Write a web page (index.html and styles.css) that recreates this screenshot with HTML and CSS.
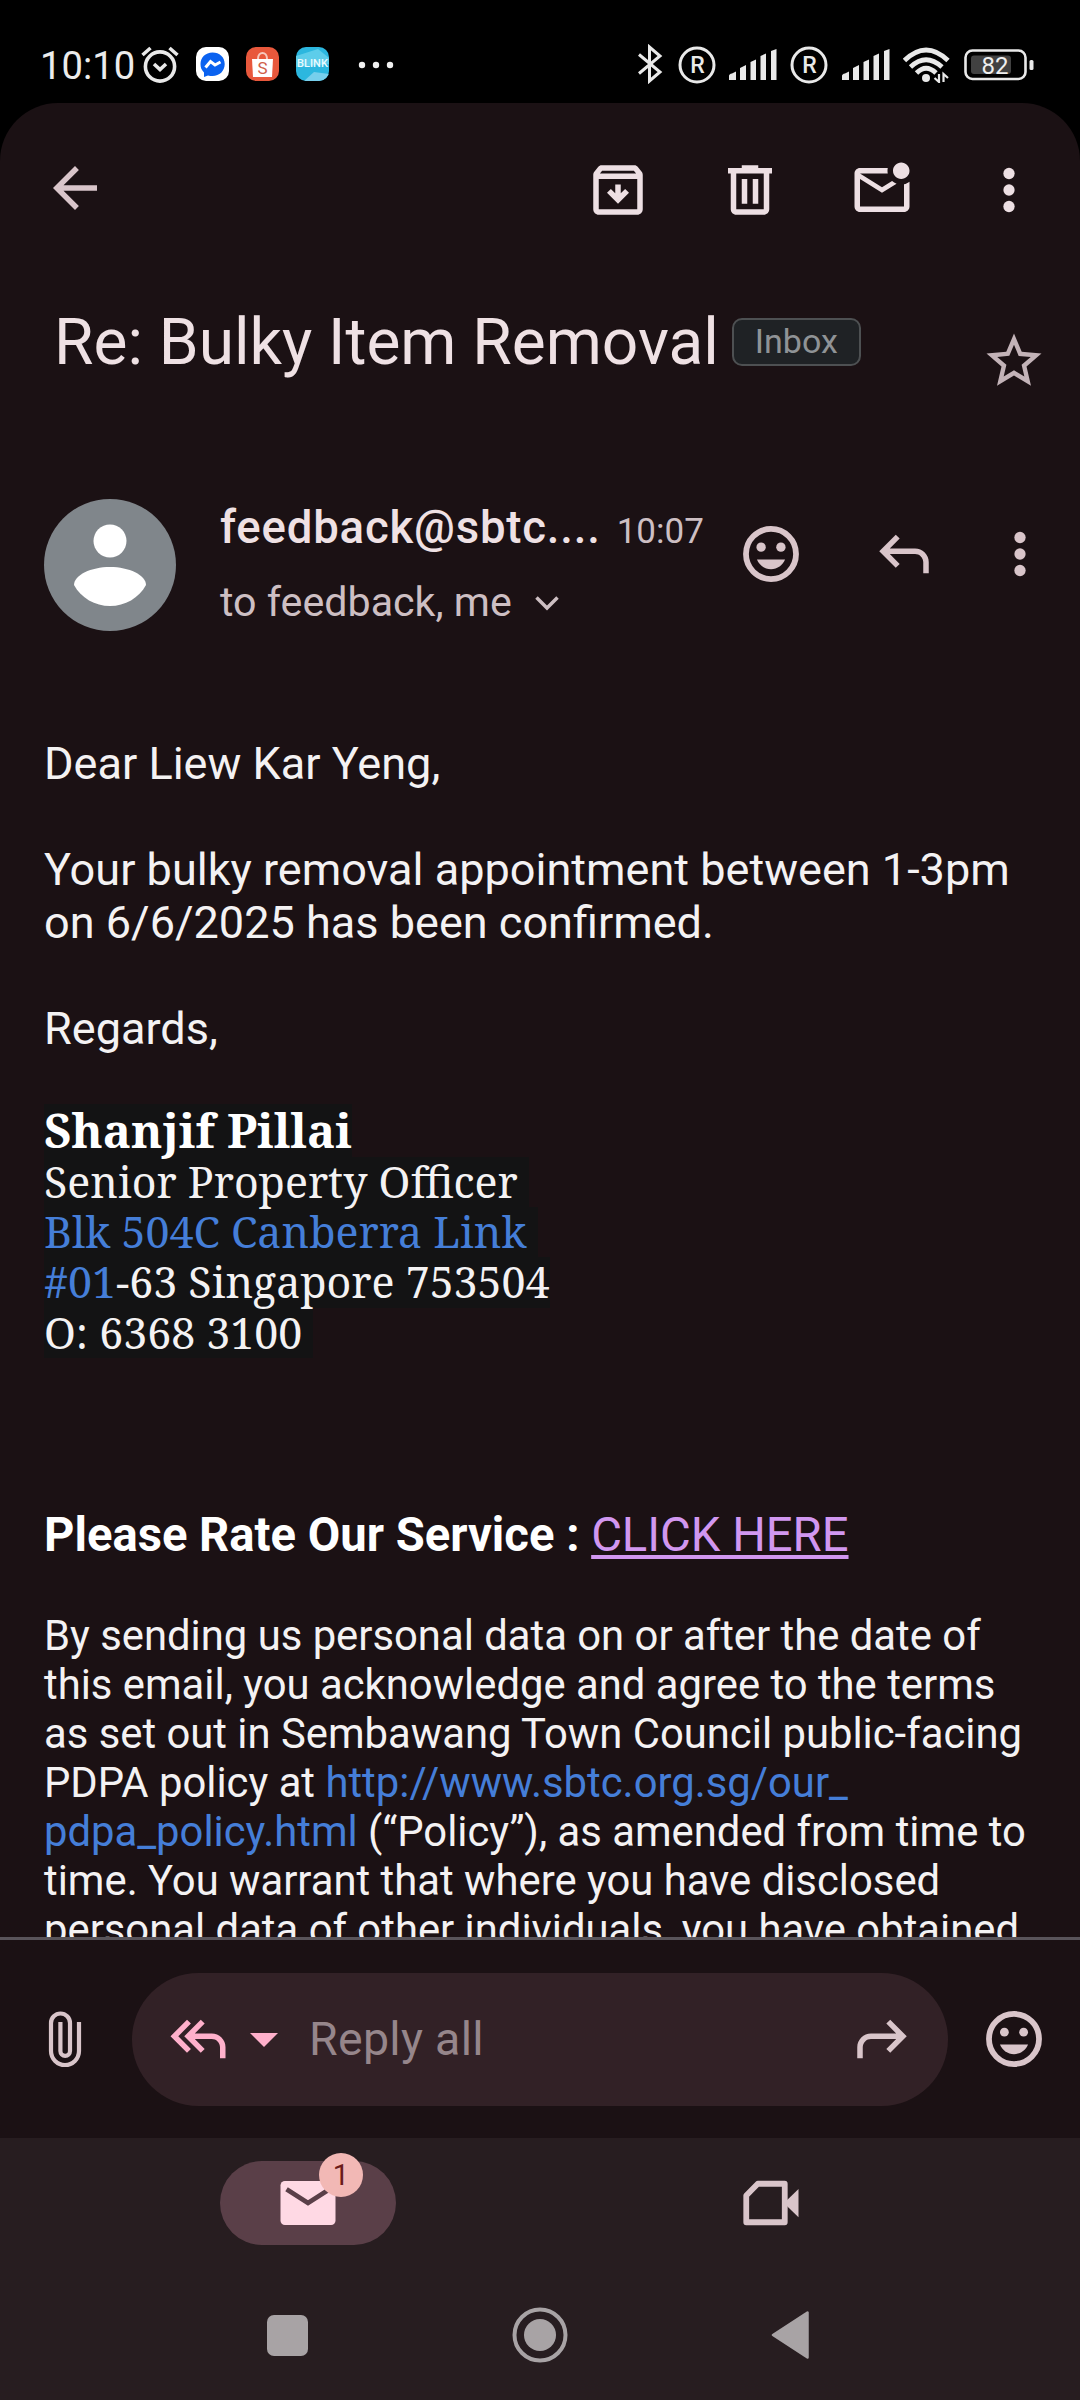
FILE: index.html
```
<!DOCTYPE html>
<html lang="en">
<head>
<meta charset="utf-8">
<title>Re: Bulky Item Removal</title>
<link rel="stylesheet" href="styles.css">
</head>
<body>
<div class="phone">
  <header class="status">
    <span class="clock">10:10</span>
    <svg class="alarm" width="40" height="38" viewBox="0 0 40 38" fill="none" stroke="#e9e9e9" stroke-width="3.6"><circle cx="20" cy="21.5" r="14.6"/><path d="M14 19l6 5.500 6-5.500M2.500 10l8-7M37.500 10l-8-7"/></svg>
    <svg class="app-icon" width="33" height="34" viewBox="0 0 33 34"><rect width="33" height="34" rx="10" fill="#fff"/><path d="M16.500 5.500c-7 0-12 5-12 11.500 0 3.500 1 6 3.500 8.500v4.500l4-1.500c1.500.5 3 .6 4.500.6 7 0 12.200-5 12.200-12S23.500 5.500 16.500 5.500z" fill="#0a62f0"/><path d="M9.500 20.500l5-6 4.500 3.500 5.500-3" fill="none" stroke="#fff" stroke-width="3"/></svg>
    <svg class="app-icon" width="33" height="34" viewBox="0 0 33 34"><rect width="33" height="34" rx="10" fill="#e8583c"/><path d="M6 12h21l-1 18H7z" fill="#fff"/><path d="M12 12c0-8 9-8 9 0" fill="none" stroke="#f6c9bf" stroke-width="2"/><text x="16.500" y="27" font-family="Roboto" font-size="17" text-anchor="middle" fill="#d0604a">S</text></svg>
    <svg class="app-icon" width="33" height="34" viewBox="0 0 33 34"><defs><clipPath id="tile"><rect width="33" height="34" rx="10"/></clipPath></defs><g clip-path="url(#tile)"><rect width="33" height="34" fill="#2cb7df"/><path d="M0 9L22 2l11 9v6L0 20z" fill="#5dcdea"/><path d="M8 34l10-9 15 2v7z" fill="#77cfec"/><text x="16.500" y="20" font-family="Roboto" font-weight="500" font-size="11" text-anchor="middle" fill="#e9fbff">BLINK</text></g></svg>
    <svg class="more" width="36" height="8" viewBox="0 0 36 8" fill="#f0f0f0"><circle cx="4" cy="4" r="3.200"/><circle cx="18" cy="4" r="3.200"/><circle cx="32" cy="4" r="3.200"/></svg>
    <svg class="bluetooth" width="26" height="40" viewBox="0 0 26 40" fill="none" stroke="#e9e9e9" stroke-width="3"><path d="M2 10.500L23 28l-10.500 9V3L23 12 2 29.500"/></svg>
    <svg class="roam" width="38" height="38" viewBox="0 0 38 38"><circle cx="19" cy="19" r="17" fill="none" stroke="#e9e9e9" stroke-width="3"/><text x="19.500" y="27" font-family="Roboto" font-weight="500" font-size="23" text-anchor="middle" fill="#e9e9e9">R</text></svg>
    <svg class="signal" width="48" height="32" viewBox="0 0 48 32" fill="#e9e9e9"><path d="M0 27q0-2 3-2.500l4-2V31H0zM11 19l6-3v15h-6zM21.500 13l5.500-2.500V31h-5.500zM31.500 7l5.500-2.500V31h-5.500zM42 2l5.500-2v31H42z"/></svg>
    <svg class="roam second" width="38" height="38" viewBox="0 0 38 38"><circle cx="19" cy="19" r="17" fill="none" stroke="#e9e9e9" stroke-width="3"/><text x="19.500" y="27" font-family="Roboto" font-weight="500" font-size="23" text-anchor="middle" fill="#e9e9e9">R</text></svg>
    <svg class="signal" width="48" height="32" viewBox="0 0 48 32" fill="#e9e9e9"><path d="M0 27q0-2 3-2.500l4-2V31H0zM11 19l6-3v15h-6zM21.500 13l5.500-2.500V31h-5.500zM31.500 7l5.500-2.500V31h-5.500zM42 2l5.500-2v31H42z"/></svg>
    <svg class="wifi" width="48" height="36" viewBox="0 0 48 36"><g fill="none" stroke="#e9e9e9" stroke-width="4.800"><path d="M1.500 13.500Q23 -7.500 45 13.500"/><path d="M7.500 20Q23 5.500 39 20"/><path d="M13.500 26Q23 16.500 33 26"/></g><circle cx="23" cy="31" r="4" fill="#e9e9e9"/><path d="M36 27v8l-4.500-4M40.500 35v-8l4.500 4" fill="none" stroke="#e9e9e9" stroke-width="2.200"/></svg>
    <svg class="battery" width="70" height="32" viewBox="0 0 70 32"><rect x="1.500" y="1.500" width="60" height="28.500" rx="7" fill="none" stroke="#e9e9e9" stroke-width="2.600"/><rect x="7" y="6.500" width="40" height="18.500" rx="3" fill="#414141"/><rect x="65.500" y="11" width="4" height="10" rx="1.500" fill="#e9e9e9"/><text x="31" y="24.500" font-family="Roboto" font-size="24" text-anchor="middle" fill="#efefef">82</text></svg>
  </header>

  <main class="panel">
    <nav class="appbar">
      <svg class="icon back" viewBox="0 0 24 24"><path d="M20 11H7.830l5.590-5.590L12 4l-8 8 8 8 1.410-1.410L7.830 13H20z"/></svg>
      <svg class="icon archive" viewBox="0 0 24 24"><path d="M20.540 5.230l-1.390-1.680C18.880 3.210 18.470 3 18 3H6c-.47 0-.88.21-1.160.55L3.460 5.230C3.170 5.570 3 6.020 3 6.500V19c0 1.100.9 2 2 2h14c1.100 0 2-.9 2-2V6.500c0-.48-.17-.93-.46-1.270zM6.240 5h11.520l.83 1H5.420l.82-1zM5 19V8h14v11H5z"/><path d="M11 10v3.200l-1.600-1.600L8 13l4 4 4-4-1.400-1.400-1.600 1.600V10z"/></svg>
      <svg class="icon trash" viewBox="0 0 24 24"><path d="M15 4V3H9v1H4v2h1v13c0 1.100.9 2 2 2h10c1.100 0 2-.9 2-2V6h1V4h-5zm2 15H7V6h10v13zM9 8h2v9H9zm4 0h2v9h-2z"/></svg>
      <svg class="icon unread" viewBox="0 0 24 24"><path d="M22 8.980V18c0 1.100-.9 2-2 2H4c-1.100 0-2-.9-2-2V6c0-1.100.9-2 2-2h10.100c-.06.32-.1.66-.1 1 0 .34.04.68.1 1H4l8 5 3.670-2.290c.47.43 1.020.76 1.630.98L12 13 4 8v10h16V9.900c.74-.15 1.420-.48 2-.92zM16 5c0 1.660 1.340 3 3 3s3-1.340 3-3-1.340-3-3-3-3 1.340-3 3z"/></svg>
      <svg class="icon menu" viewBox="0 0 24 24"><circle cx="12" cy="6" r="2.050"/><circle cx="12" cy="12" r="2.050"/><circle cx="12" cy="18" r="2.050"/></svg>
    </nav>

    <section class="subject">
      <h1>Re: Bulky Item Removal</h1>
      <span class="chip">Inbox</span>
      <svg class="icon star" viewBox="0 0 24 24"><path d="M22 9.240l-7.190-.62L12 2 9.190 8.630 2 9.240l5.460 4.730L5.820 21 12 17.270 18.180 21l-1.630-7.030L22 9.240zM12 15.400l-3.760 2.270 1-4.280-3.320-2.880 4.380-.38L12 6.100l1.710 4.040 4.380.38-3.320 2.880 1 4.280L12 15.400z"/></svg>
    </section>

    <section class="sender">
      <svg class="avatar" width="132" height="132" viewBox="0 0 132 132"><circle cx="66" cy="66" r="66" fill="#80868b"/><circle cx="66" cy="42" r="16.500" fill="#fff"/><path d="M66 68c19 0 36 8 36 18-7 13-21 21-36 21s-29-8-36-21c0-10 17-18 36-18z" fill="#fff"/></svg>
      <div class="who">
        <div class="from"><span class="name">feedback@sbtc....</span><span class="time">10:07</span></div>
        <div class="to"><span>to feedback, me</span><svg width="26" height="16" viewBox="0 0 26 16" fill="none" stroke="#cdbfc3" stroke-width="3.500"><path d="M2.500 2.500L13 13 23.500 2.500"/></svg></div>
      </div>
      <svg class="icon smile" viewBox="0 0 24 24"><circle cx="12" cy="12" r="9.100" fill="none" stroke="#d9c5ca" stroke-width="2.100"/><circle cx="8.400" cy="9.500" r="1.700"/><circle cx="15.600" cy="9.500" r="1.700"/><path d="M12 17.500c2.330 0 4.310-1.460 5.110-3.500H6.890c.8 2.040 2.780 3.500 5.110 3.500z"/></svg>
      <svg class="icon reply" viewBox="0 0 24 24"><path d="M19 19v-4c0-.83-.29-1.540-.88-2.120C17.540 12.290 16.830 12 16 12H6.830l3.600 3.600L9 17l-6-6 6-6 1.430 1.400L6.830 10H16c1.380 0 2.560.49 3.540 1.460C20.510 12.440 21 13.630 21 15v4z"/></svg>
      <svg class="icon options" viewBox="0 0 24 24"><circle cx="12" cy="6" r="2.050"/><circle cx="12" cy="12" r="2.050"/><circle cx="12" cy="18" r="2.050"/></svg>
    </section>

    <article class="message">
      <p>Dear Liew Kar Yeng,</p>
      <p>Your bulky removal appointment between 1-3pm<br>on 6/6/2025 has been confirmed.</p>
      <p>Regards,</p>
      <div class="signature">
        <div class="sig-name">Shanjif Pillai</div>
        <div>Senior Property Officer </div>
        <div><a>Blk 504C Canberra Link</a> </div>
        <div><a>#01</a>-63 Singapore 753504</div>
        <div>O: 6368 3100 </div>
      </div>
      <p class="rate"><b>Please Rate Our Service : </b><a>CLICK HERE</a></p>
      <p class="legal">By sending us personal data on or after the date of<br>this email, you acknowledge and agree to the terms<br>as set out in Sembawang Town Council public-facing<br>PDPA policy at <a>http://www.sbtc.org.sg/our_</a><br><a>pdpa_policy.html</a> (“Policy”), as amended from time to<br>time. You warrant that where you have disclosed<br>personal data of other individuals, you have obtained</p>
    </article>

    <section class="composer">
      <svg class="clip" width="40" height="66" viewBox="0 0 40 66" fill="none" stroke="#d9c5ca" stroke-width="4.200"><path d="M34 16v29a14 14 0 0 1-28 0V17a9.500 9.500 0 0 1 19 0v28a4.800 4.800 0 0 1-9.600 0V16"/></svg>
      <div class="field">
        <svg class="icon pink" viewBox="0 0 24 24"><path d="M20 19v-4c0-.83-.29-1.540-.88-2.120C18.540 12.290 17.830 12 17 12h-6.170l3.600 3.600L13 17l-6-6 6-6 1.430 1.400-3.600 3.600H17c1.380 0 2.560.49 3.540 1.460C21.510 12.440 22 13.630 22 15v4zM8 17l-6-6 6-6 1.430 1.400L4.830 11l4.600 4.600z"/></svg>
        <svg class="caret" width="28" height="14" viewBox="0 0 28 14"><path d="M0 0h28L14 14z" fill="#ffb0cb"/></svg>
        <span class="hint">Reply all</span>
        <svg class="icon forward" viewBox="0 0 24 24"><path d="M5 19v-4c0-.83.29-1.540.88-2.120C6.460 12.290 7.170 12 8 12h9.170l-3.600 3.600L15 17l6-6-6-6-1.430 1.400 3.600 3.600H8c-1.380 0-2.560.49-3.540 1.460C3.490 12.440 3 13.630 3 15v4z"/></svg>
      </div>
      <svg class="icon emoji" viewBox="0 0 24 24"><circle cx="12" cy="12" r="9.100" fill="none" stroke="#d9c5ca" stroke-width="2.100"/><circle cx="8.500" cy="9.500" r="1.600"/><circle cx="15.500" cy="9.500" r="1.600"/><path d="M12 17.500c2.330 0 4.310-1.460 5.110-3.500H6.890c.8 2.040 2.780 3.500 5.110 3.500z"/></svg>
    </section>
  </main>

  <footer class="bottom">
    <nav class="tabs">
      <div class="tab">
        <svg class="icon" viewBox="0 0 24 24"><rect x="2" y="4" width="20" height="16" rx="1.600" fill="#ffd9e4"/><path d="M4.200 7l7.800 5 7.800-5" fill="none" stroke="#5a3f48" stroke-width="1.700"/></svg>
        <span class="badge">1</span>
      </div>
      <svg class="icon video" viewBox="0 0 24 24"><path d="M7.200 5H17v14H3V9.300z" fill="none" stroke="#d9c5ca" stroke-width="2.100" stroke-linejoin="round"/><path d="M17.500 11.300L22 6.900v10.300l-4.500-4.400z"/></svg>
    </nav>
    <nav class="system">
      <svg width="41" height="41" viewBox="0 0 41 41"><rect width="41" height="41" rx="7" fill="#a8a3a5"/></svg>
      <svg width="56" height="56" viewBox="0 0 56 56"><circle cx="28" cy="28" r="25.500" fill="none" stroke="#a8a3a5" stroke-width="4"/><circle cx="28" cy="28" r="16" fill="#a8a3a5"/></svg>
      <svg width="38" height="48" viewBox="0 0 38 48"><path d="M36.500 1.500v45L2 24z" fill="#a8a3a5" stroke="#a8a3a5" stroke-width="2.500" stroke-linejoin="round"/></svg>
    </nav>
  </footer>
</div>
</body>
</html>
```
FILE: styles.css
```
* { box-sizing: border-box; }
body { margin: 0; background: #000; font-family: Roboto, sans-serif; color: #f4f2f3; }
svg { display: block; flex: none; }
h1, p { margin: 0; font-weight: 400; }
.phone { width: 1080px; height: 2400px; overflow: hidden; display: flex; flex-direction: column; }
.icon { width: 66px; height: 66px; fill: #d9c5ca; }

.status { height: 103px; padding: 26px 0 0 40px; display: flex; align-items: center; }
.clock { font-size: 38.200px; line-height: 48px; width: 100px; margin-top: 3px; color: #ececec; }
.alarm { margin: -2px 16px 0 0; }
.app-icon { margin: -2px 17px 0 0; }
.more { margin-left: 12px; }
.bluetooth { margin: -2px 0 0 243px; }
.roam { margin-left: 14.500px; }
.signal { margin-left: 13.500px; }
.second { margin-left: 13px; }
.wifi { margin-left: 13px; }
.battery { margin-left: 13px; }

.panel { height: 2035px; background: #1b1114; border-radius: 58px 58px 0 0; display: flex; flex-direction: column; }

.appbar { height: 174px; flex: none; padding-left: 42px; display: flex; align-items: center; }
.appbar .icon { fill: #eddfe3; }
.appbar .back { margin-bottom: 4px; fill: #d9c5ca; }
.archive { margin-left: 477px; }
.trash, .unread { margin-left: 66px; }
.menu { margin-left: 60.500px; }

.subject { height: 222px; flex: none; padding: 26px 33px 0 54px; display: flex; align-items: flex-start; }
h1 { margin-top: 1px; font-size: 64px; line-height: 78px; color: #efe1e4; white-space: nowrap; }
.chip { margin: 15px 0 0 13px; width: 129px; height: 48px; border: 2px solid #4d5052; border-radius: 10px; background: #1f2225; color: #8f9396; font-size: 34px; line-height: 43px; text-align: center; }
.star { margin: 25px 0 0 auto; fill: #c3b3b8; }

.sender { height: 238px; flex: none; padding-left: 44px; display: flex; align-items: flex-start; }
.who { width: 518px; padding: 1px 0 0 44px; }
.from, .to { display: flex; white-space: nowrap; }
.name { width: 398px; font-size: 45.500px; line-height: 56px; font-weight: 500; letter-spacing: .820px; color: #efe1e4; }
.time { margin-left: 16px; font-size: 35px; line-height: 63px; color: #cdbfc3; height: 56px; }
.to { margin-top: 21px; font-size: 41.200px; line-height: 51px; color: #cdbfc3; align-items: center; gap: 22px; }
.sender .icon { margin-top: 22px; }
.smile { margin-left: 44px; }
.reply { margin-left: 67px; }
.options { margin-left: 49.500px; }

.message { height: 1200px; flex: none; padding-left: 44px; overflow: hidden; font-size: 45.050px; line-height: 53px; white-space: nowrap; }
.message p { margin-bottom: 53px; }
.message a { color: #457ed8; }
.signature { margin: -4.500px 0 150.500px; font-family: "Noto Serif", "DejaVu Serif", serif; font-size: 42.900px; line-height: 50.200px; }
.signature div { width: fit-content; white-space: pre; background: #131314; }
.signature .sig-name { font-size: 47.200px; line-height: 53.500px; font-weight: 700; color: #fff; }
.message .rate { font-size: 47.200px; line-height: 54px; margin-bottom: 49px; white-space: pre; }
.rate b { font-weight: 700; color: #fff; }
.message .rate a { color: #d197f0; text-decoration: underline; text-decoration-thickness: 4px; text-underline-offset: 4px; }
.message .legal { font-size: 41.800px; line-height: 49px; margin: 0; }

.composer { flex: 1; border-top: 3px solid #59545a; display: flex; align-items: center; padding-left: 45px; }
.clip { margin-right: 47px; }
.field { width: 816px; height: 133px; border-radius: 67px; background: #322126; display: flex; align-items: center; padding: 0 33px; }
.pink { fill: #ffb0cb; }
.caret { margin: 2px 31px 0 19px; }
.hint { font-size: 46.500px; letter-spacing: .3px; color: #96868b; }
.forward { margin-left: auto; }
.emoji { margin-left: 33px; }

.bottom { height: 262px; background: #271d20; }
.tabs { height: 130px; display: flex; align-items: center; padding-left: 220px; }
.tab { position: relative; width: 176px; height: 84px; border-radius: 42px; background: #5a3f48; display: flex; align-items: center; justify-content: center; }
.badge { position: absolute; left: 99px; top: -8px; width: 44px; height: 44px; border-radius: 50%; background: #f2b8b5; color: #6b1c1a; font-size: 29px; line-height: 45px; text-align: center; }
.video { margin-left: 342px; }
.system { height: 132px; display: flex; align-items: center; padding: 2px 0 0 267px; }
.system svg:nth-child(2) { margin-left: 204px; }
.system svg:nth-child(3) { margin-left: 203px; }
```
